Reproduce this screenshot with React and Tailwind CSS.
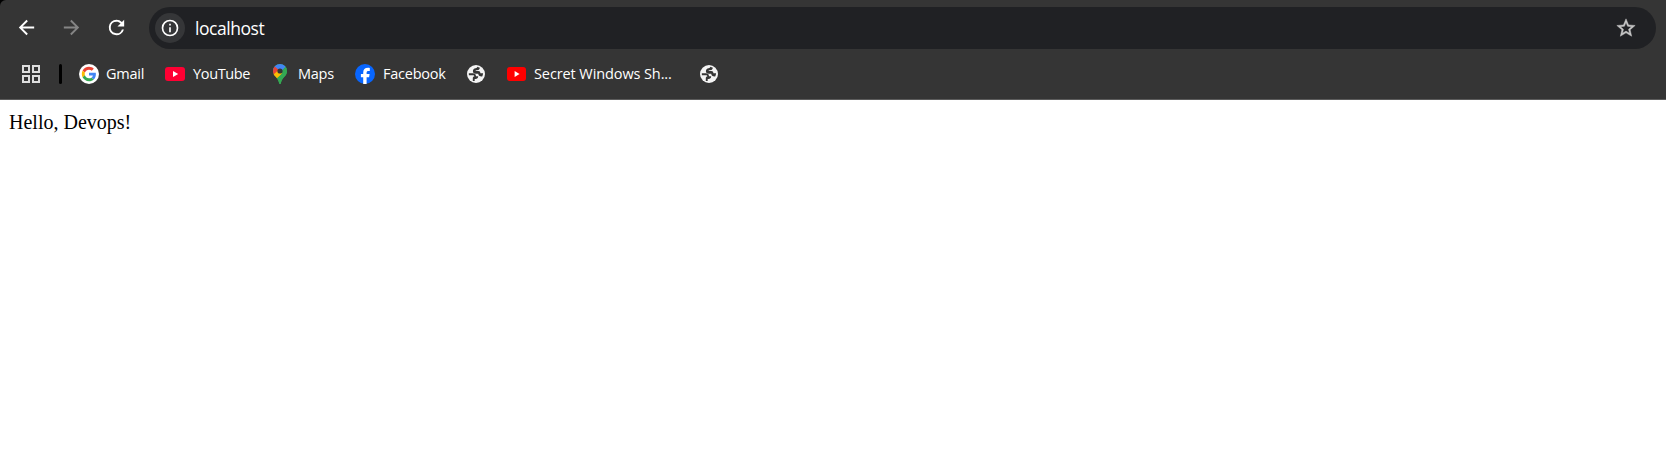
function Svg({ size, box = "0 0 24 24", className = "", children }) {
  return (
    <svg width={size} height={size} viewBox={box} fill="currentColor" className={"block shrink-0 " + className}>
      {children}
    </svg>
  );
}

function Globe() {
  return (
    <Svg size={18} box="0 0 18 18" className="text-[#f4f4f4]">
      <circle cx="9" cy="9" r="9" />
      <path d="M1.800 8.300h4.100c1.900 0 3.100 1 3.100 3h2.200c0 1.800-1.100 2.700-2.700 2.700h-.8v2H5.800v-2.800c0-1 .6-1.600 1.500-1.600 0-.9-.5-1.400-1.400-1.400H1.900z" fill="#353535" />
      <path d="M10.200 1.800l2.700.9c-.3 1.700-1.300 2.500-2.900 2.500-1 0-1.500.3-1.500.8h2.700c1.500 0 2.200.9 2.200 2.300h2.700c-.1 1.200-.4 2.200-.9 3.100-2.400.2-3.900-.8-3.900-2.700H8.800c-1.900 0-2.900-1-2.900-2.500 0-1.700 1-2.700 2.700-2.900 1-.1 1.600-.5 1.600-1.500z" fill="#353535" />
    </Svg>
  );
}

function GoogleLogo() {
  return (
    <svg width="20" height="20" viewBox="0 0 20 20" className="block shrink-0">
      <circle cx="10" cy="10" r="10" fill="#fff" />
      <g transform="translate(2.8 2.8) scale(.3)">
        <path fill="#EA4335" d="M24 9.5c3.54 0 6.71 1.22 9.21 3.6l6.85-6.85C35.9 2.38 30.47 0 24 0 14.62 0 6.51 5.38 2.56 13.22l7.98 6.19C12.43 13.72 17.74 9.5 24 9.5z" />
        <path fill="#4285F4" d="M46.98 24.55c0-1.57-.15-3.09-.38-4.55H24v9.02h12.94c-.58 2.96-2.26 5.48-4.78 7.18l7.73 6c4.51-4.18 7.09-10.36 7.09-17.65z" />
        <path fill="#FBBC05" d="M10.53 28.59c-.48-1.45-.76-2.99-.76-4.59s.27-3.14.76-4.59l-7.98-6.19C.92 16.46 0 20.12 0 24c0 3.88.92 7.54 2.56 10.78l7.97-6.19z" />
        <path fill="#34A853" d="M24 48c6.48 0 11.93-2.13 15.89-5.81l-7.73-6c-2.15 1.45-4.92 2.3-8.16 2.3-6.26 0-11.57-4.22-13.47-9.91l-7.98 6.19C6.51 42.62 14.62 48 24 48z" />
      </g>
    </svg>
  );
}

function YouTubeLogo({ color, w }) {
  return (
    <svg width={w} height="20" viewBox="0 0 20 20" preserveAspectRatio="none" className="block shrink-0">
      <rect y="3" width="20" height="14" rx="3" fill={color} />
      <path d="M8 7v6l5.2-3z" fill="#fff" />
    </svg>
  );
}

function MapsLogo() {
  return (
    <svg width="14" height="20" viewBox="0 0 14 20" className="block shrink-0">
      <defs>
        <clipPath id="pin">
          <path d="M7 0a7 7 0 0 0-7 7c0 2.2.9 3.8 2.2 5.3C4 14.500 5.500 16 6.100 18.900c.2.800.4 1.100.9 1.100s.7-.3.9-1.100C8.500 16 10 14.500 11.800 12.300 13.100 10.800 14 9.200 14 7a7 7 0 0 0-7-7z" />
        </clipPath>
      </defs>
      <g clipPath="url(#pin)">
        <path d="M0 0h14v20H0z" fill="#34a853" />
        <path d="M0 0h14v4L9 9.500 7 7 0 8z" fill="#4285f4" />
        <path d="M-1 4 1.700 2.400 6.500 6.500 .4 12.500z" fill="#ea4335" />
        <path d="M0 11 5 6.500l4.500 3L3.200 15z" fill="#fbbc04" />
        <path d="M12.700 2.500 8.500 7 9 9.500l-6 6L8 22l8-10V4z" fill="#34a853" />
      </g>
      <circle cx="7" cy="7" r="2.600" fill="#353535" />
    </svg>
  );
}

function FacebookLogo() {
  return (
    <svg width="20" height="20" viewBox="0 0 20 20" className="block shrink-0">
      <circle cx="10" cy="10" r="10" fill="#0866ff" />
      <path d="M8.2 20v-6.800H5.900V10h2.300V8.800c0-3.400 1.600-5 4.900-5 .6 0 1.200.1 1.700.2v2.900h-1.300c-1.400 0-1.900.6-1.900 1.900V10h3l-.5 3.200h-2.500v6.700c-1.100.2-2.300.2-3.400.1z" fill="#fff" />
    </svg>
  );
}

export default function App() {
  return (
    <div className="h-[474px] w-full overflow-hidden bg-white">
      <div className="bg-black">
        <header className="h-[100px] rounded-tl-[6px] border-b border-[#5c5c5c] bg-[#353535] pt-[7px] font-['Open_Sans','Noto_Sans',sans-serif] whitespace-nowrap text-white">
          <div className="flex h-[42px] items-center pr-[10px] pl-[15px]">
            <Svg size={23} className="mr-[22px] mb-px">
              <path d="M20 11H7.830l5.590-5.590L12 4l-8 8 8 8 1.410-1.410L7.830 13H20v-2z" />
            </Svg>
            <Svg size={23} className="mr-[22px] mb-px text-[#858585]">
              <path d="M12 4l-1.410 1.410L16.170 11H4v2h12.170l-5.580 5.590L12 20l8-8z" />
            </Svg>
            <Svg size={23} className="mr-[21px] mb-px">
              <path d="M17.650 6.350A7.960 7.960 0 0 0 12 4a8 8 0 1 0 7.730 10h-2.080A6 6 0 1 1 12 6c1.660 0 3.140.69 4.220 1.780L13 11h7V4l-2.350 2.350z" />
            </Svg>
            <div className="flex h-[42px] flex-1 items-center rounded-full bg-[#202124] pr-[19px] pl-[6px]">
              <div className="flex size-[30px] items-center justify-center rounded-full bg-[#353638]">
                <Svg size={20}>
                  <path d="M11 7h2v2h-2zm0 4h2v6h-2zm1-9a10 10 0 1 0 0 20 10 10 0 0 0 0-20zm0 18a8 8 0 1 1 0-16 8 8 0 0 1 0 16z" />
                </Svg>
              </div>
              <span className="ml-[10px] text-[17.5px] leading-[30px] tracking-[-0.45px]">localhost</span>
              <Svg size={22} className="ml-auto text-[#c7c7c7]">
                <path stroke="currentColor" strokeWidth=".5" d="M22 9.240l-7.190-.62L12 2 9.190 8.630 2 9.240l5.460 4.730L5.820 21 12 17.270 18.180 21l-1.630-7.030L22 9.240zM12 15.400l-3.760 2.270 1-4.280-3.320-2.880 4.380-.38L12 6.100l1.710 4.040 4.380.38-3.320 2.880 1 4.280L12 15.400z" />
              </Svg>
            </div>
          </div>
          <nav className="flex h-[50px] items-center pl-[22px] text-[14.5px] leading-[24px] tracking-[-0.25px]">
            <Svg size={18} box="0 0 18 18" className="text-[#dedede]">
              <path fillRule="evenodd" d="M0 0h8v8H0zM2 2v4h4V2zM10 0h8v8h-8zM12 2v4h4V2zM0 10h8v8H0zM2 12v4h4v-4zM10 10h8v8h-8zM12 12v4h4v-4z" />
            </Svg>
            <div className="ml-[19px] h-[20px] w-[3px] rounded-full bg-black" />
            <div className="ml-[17px] flex w-[65px] items-center gap-[7px]"><GoogleLogo /><span>Gmail</span></div>
            <div className="ml-[21px] flex w-[85px] items-center gap-[8px] tracking-[-0.35px]"><YouTubeLogo color="#ff0033" w={20} /><span>YouTube</span></div>
            <div className="ml-[23px] flex w-[61px] items-center gap-[11px]"><MapsLogo /><span>Maps</span></div>
            <div className="ml-[21px] flex w-[91px] items-center gap-[8px]"><FacebookLogo /><span>Facebook</span></div>
            <div className="ml-[21px]"><Globe /></div>
            <div className="ml-[22px] flex w-[164px] items-center gap-[8px] tracking-[-0.1px]"><YouTubeLogo color="#ff0000" w={19} /><span>Secret Windows Sh...</span></div>
            <div className="ml-[29px]"><Globe /></div>
          </nav>
        </header>
      </div>
      <main className="px-[9px] pt-[11px] font-['Liberation_Serif',serif] text-[20px] leading-[23px] text-black">
        Hello, Devops!
      </main>
    </div>
  );
}
